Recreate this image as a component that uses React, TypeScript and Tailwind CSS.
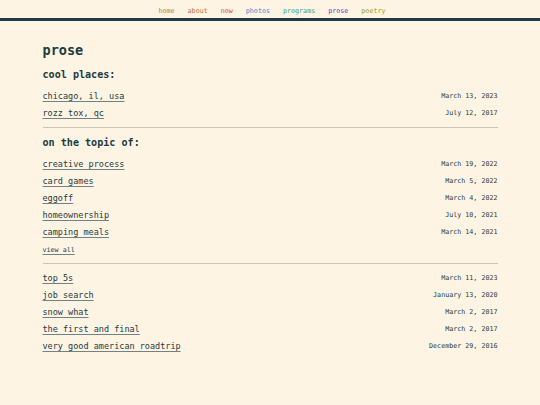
const nav = [
  { label: "home", color: "text-[#b88320]" },
  { label: "about", color: "text-[#c56d3f]" },
  { label: "now", color: "text-[#d9423f]" },
  { label: "photos", color: "text-[#3f86cc]" },
  { label: "programs", color: "text-[#33a383]" },
  { label: "prose", color: "text-[#5a3fb5]" },
  { label: "poetry", color: "text-[#95a020]" },
];

const places = [
  { title: "chicago, il, usa", date: "March 13, 2023" },
  { title: "rozz tox, qc", date: "July 12, 2017" },
];

const topics = [
  { title: "creative process", date: "March 19, 2022" },
  { title: "card games", date: "March 5, 2022" },
  { title: "eggoff", date: "March 4, 2022" },
  { title: "homeownership", date: "July 10, 2021" },
  { title: "camping meals", date: "March 14, 2021" },
];

const posts = [
  { title: "top 5s", date: "March 11, 2023" },
  { title: "job search", date: "January 13, 2020" },
  { title: "snow what", date: "March 2, 2017" },
  { title: "the first and final", date: "March 2, 2017" },
  { title: "very good american roadtrip", date: "December 29, 2016" },
];

function Row({ title, date }: { title: string; date: string }) {
  return (
    <div className="flex items-center justify-between h-[17px]">
      <a
        href="#"
        className="text-[8.5px] leading-[17px] underline underline-offset-2 decoration-[#6f8287]"
      >
        {title}
      </a>
      <span className="text-[6.7px] leading-[17px]">{date}</span>
    </div>
  );
}

export default function App() {
  return (
    <div
      className="min-h-[405px] bg-[#fdf4e3] text-[#1d3b41]"
      style={{ fontFamily: '"DejaVu Sans Mono", "Liberation Mono", monospace' }}
    >
      {/* NAV */}
      <nav className="h-[21px] pt-[6px] border-b-[3px] border-[#1d3b41] flex justify-center gap-[13px] text-[6.7px] leading-[10px] pl-[4px]">
        {nav.map((n) => (
          <a key={n.label} href="#" className={n.color}>
            {n.label}
          </a>
        ))}
      </nav>

      <main className="w-[455px] mx-auto pt-[19px]">
        <h1 className="text-[13.5px] leading-[20px] font-bold">prose</h1>

        <h2 className="mt-[8px] text-[10.1px] leading-[14px] font-bold">cool places:</h2>
        <div className="mt-[5.5px]">
          {places.map((p) => (
            <Row key={p.title} {...p} />
          ))}
        </div>

        <hr className="mt-[5.5px] border-t border-[#c9c5b9]" />

        <h2 className="mt-[8px] text-[10.1px] leading-[14px] font-bold">on the topic of:</h2>
        <div className="mt-[5.5px]">
          {topics.map((p) => (
            <Row key={p.title} {...p} />
          ))}
        </div>
        <a href="#" className="block mt-[4px] text-[6.7px] leading-[10px] underline underline-offset-2 decoration-[#6f8287]">
          view all
        </a>

        <hr className="mt-[8px] border-t border-[#c9c5b9]" />

        <div className="mt-[6px]">
          {posts.map((p) => (
            <Row key={p.title} {...p} />
          ))}
        </div>
      </main>
    </div>
  );
}
